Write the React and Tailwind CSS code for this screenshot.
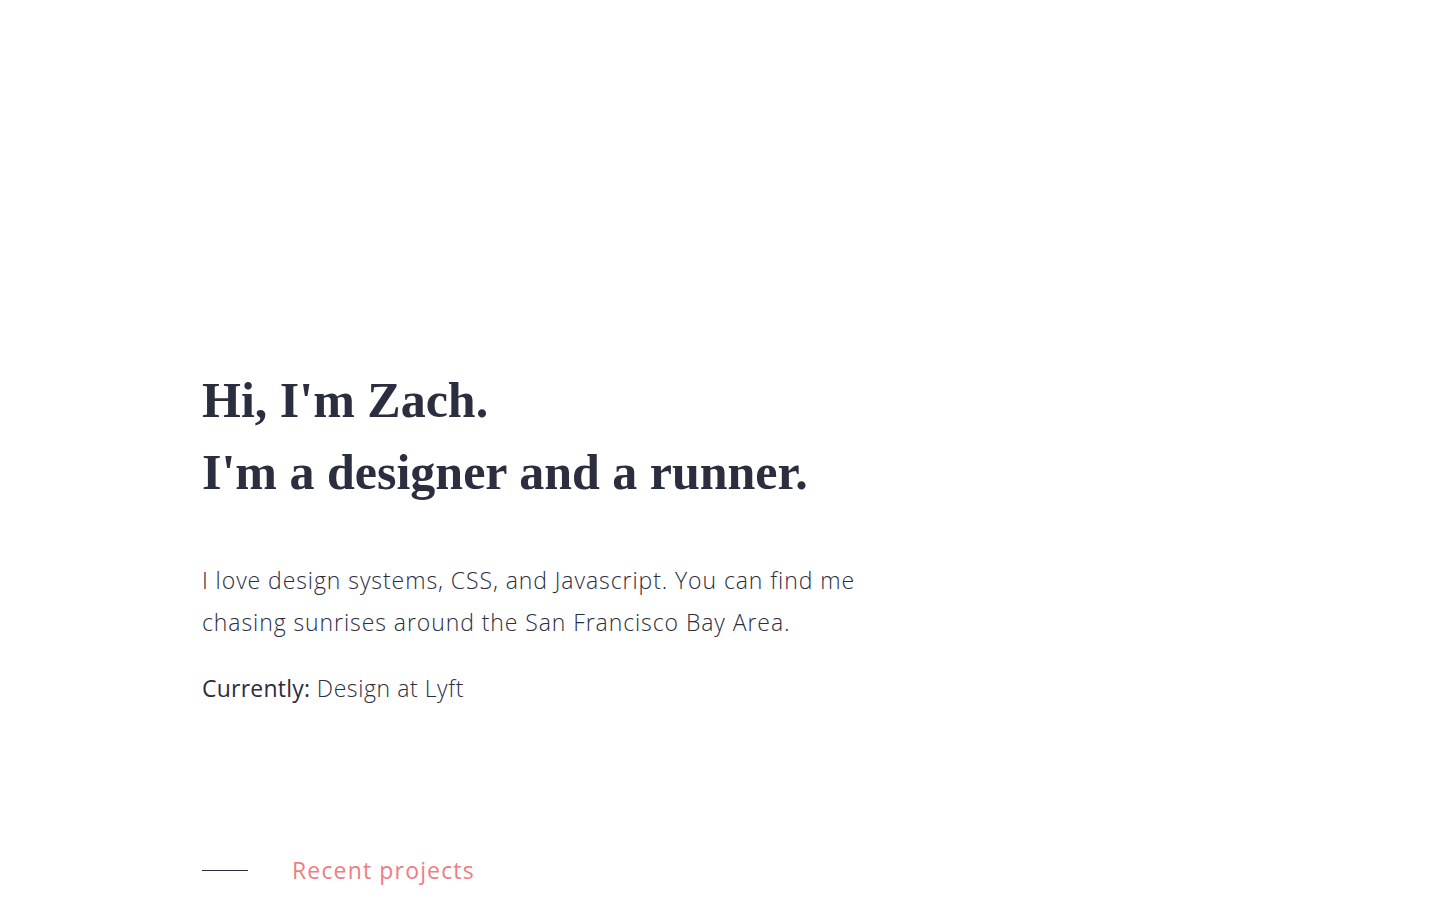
import React from "react";

export default function App() {
  return (
    <div className="min-h-screen bg-white">
      <main className="pl-[202px] pt-[364px] pb-24">
        <h1 className="font-['Liberation_Serif',serif] font-bold text-[50px] leading-[72px] text-[#2b2e3f]">
          Hi, I'm Zach.
          <br />
          I'm a designer and a runner.
        </h1>
        <p className="mt-[51px] max-w-[700px] font-['Open_Sans',sans-serif] font-light text-[23px] leading-[42px] tracking-[0.04em] text-[#2b2e3f]">
          I love design systems, CSS, and Javascript. You can find me chasing
          sunrises around the San Francisco Bay Area.
        </p>
        <p className="mt-[24px] font-['Open_Sans',sans-serif] font-light text-[23px] leading-[42px] tracking-[0.025em] text-[#2b2e3f]">
          <span className="font-normal tracking-[0.01em]">Currently:</span> Design at Lyft
        </p>
        <div className="mt-[144px] flex items-center gap-[44px]">
          <span className="block w-[46px] h-px bg-[#2b2e3f]" />
          <h2 className="font-['Open_Sans',sans-serif] font-medium text-[23px] tracking-[0.05em] text-[#ef7d83]">
            Recent projects
          </h2>
        </div>
      </main>
    </div>
  );
}
